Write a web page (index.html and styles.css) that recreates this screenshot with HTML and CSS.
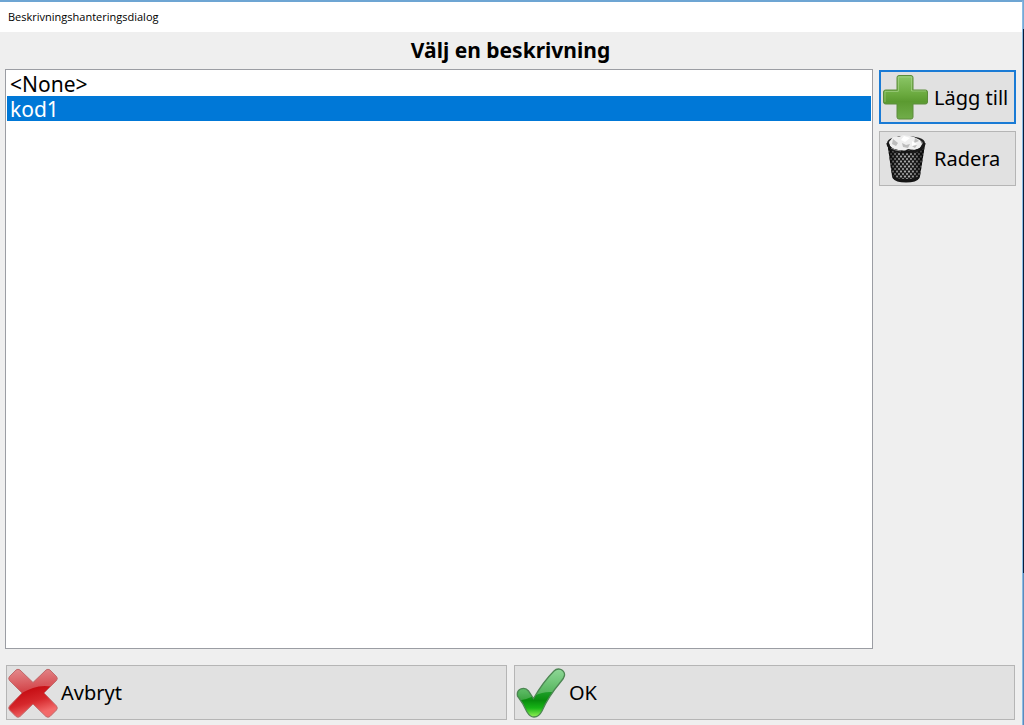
FILE: index.html
```html
<!DOCTYPE html>
<html lang="sv">
<head>
<meta charset="utf-8">
<meta name="viewport" content="width=device-width, initial-scale=1">
<title>Beskrivningshanteringsdialog</title>
<link rel="stylesheet" href="styles.css">
</head>
<body>
<div class="window">
  <header class="titlebar">Beskrivningshanteringsdialog</header>
  <main class="dialog">
    <h1 class="heading"><label for="descriptions">Välj en beskrivning</label></h1>
    <div class="content">
      <select class="list" id="descriptions" size="2">
        <option class="item">&lt;None&gt;</option>
        <option class="item" selected>kod1</option>
      </select>
      <div class="side">
        <button class="button button-default" type="button">
          <svg class="icon" viewBox="0 0 50 50" aria-hidden="true">
            <defs>
              <linearGradient id="plus" x1="0" y1="0" x2="0" y2="1">
                <stop offset="0" stop-color="#8cc768"/><stop offset=".45" stop-color="#69a83d"/><stop offset=".6" stop-color="#5b9a30"/><stop offset="1" stop-color="#71ad4a"/>
              </linearGradient>
            </defs>
            <path d="M18 3.500h12q2 0 2 2V18h12.500q2 0 2 2v10q0 2-2 2H32v13q0 2-2 2H18q-2 0-2-2V32H4.500q-2 0-2-2V20q0-2 2-2H16V5.500q0-2 2-2z" fill="url(#plus)" stroke="#5c8c3c"/>
            <path d="M17.500 19V5h13v14H45M4 30V19.500h13.500" fill="none" stroke="#b0d995" stroke-opacity=".55"/>
          </svg>
          <span>Lägg till</span>
        </button>
        <button class="button" type="button">
          <svg class="icon" viewBox="0 0 50 50" aria-hidden="true">
            <defs>
              <pattern id="mesh" width="4" height="5" patternUnits="userSpaceOnUse">
                <rect width="4" height="5" fill="#ccc"/>
                <path d="M0 0l4 5M4 0L0 5" stroke="#1c1c1c" stroke-width="1.300"/>
              </pattern>
              <linearGradient id="shade"><stop offset="0" stop-opacity=".85"/><stop offset=".3" stop-opacity=".2"/><stop offset=".6" stop-opacity=".1"/><stop offset="1" stop-opacity=".85"/></linearGradient>
            </defs>
            <path d="M6.500 10 11 42q2 6 14 6t14-6l5-32z" fill="url(#mesh)"/>
            <path d="M6.500 10 11 42q2 6 14 6t14-6l5-32z" fill="url(#shade)"/>
            <path d="M11 41q3 4 14 4t14-4l-.5 3q-3 4.500-13.500 4.500T11.500 44z" fill="#151515"/>
            <ellipse cx="25" cy="9" rx="18" ry="6" fill="#777" stroke="#222" stroke-width="2"/>
            <path d="m8 8 4-5 6 0 4-2 7 1 4 1 6 3 2 4-2 4-5 2-7-1-4 2-6-1-5-1-3-3z" fill="#efefef"/>
            <path d="m12 5 5 4-2 3-4-2zM21 9l4 2 4-1-2 4-5-1zM34 4l-1 5 5-2zM31 12l5-1-2 3z" fill="#bdbdbd"/>
            <path d="m23 2 6 2-5 4-4-2zM31 7l5 3-5 2z" fill="#fff"/>
            <path d="M6.500 9Q8 18 25 18T43.500 9" fill="none" stroke="#181818" stroke-width="2.500"/>
            <path d="M10 14q4 2.500 10 3" fill="none" stroke="#888"/>
          </svg>
          <span>Radera</span>
        </button>
      </div>
    </div>
    <footer class="footer">
      <button class="button" type="button">
        <svg class="icon" viewBox="0 0 50 50" aria-hidden="true">
          <defs>
            <linearGradient id="red" x1="0" y1="0" x2=".3" y2="1"><stop offset="0" stop-color="#cf3034"/><stop offset=".5" stop-color="#c60d13"/><stop offset=".75" stop-color="#d5272b"/><stop offset="1" stop-color="#f36a6a"/></linearGradient>
            <linearGradient id="redgloss" x1="0" y1="0" x2="0" y2="1"><stop offset="0" stop-color="#fff" stop-opacity=".45"/><stop offset="1" stop-color="#fff" stop-opacity=".15"/></linearGradient>
            <clipPath id="cross"><path d="M1.500 8.500 8 2q2-1.500 4 0L25 14.500 38 2q2-1.500 4 0L48.500 8.500q1.500 2 0 4L36 25l12.500 13q1.500 2 0 4L42 48.500q-2 1.500-4 0L25 36 12 48.500q-2 1.500-4 0L1.500 42q-1.500-2 0-4l12.500-13L1.500 12.500q-1.500-2 0-4z"/></clipPath>
          </defs>
          <g clip-path="url(#cross)">
            <path d="M0 0h50v50H0z" fill="url(#red)"/>
            <path d="M0 0h50v20Q36 16 25 20T10 28L0 32z" fill="url(#redgloss)"/>
          </g>
          <path d="M1.500 8.500 8 2q2-1.500 4 0L25 14.500 38 2q2-1.500 4 0L48.500 8.500q1.500 2 0 4L36 25l12.500 13q1.500 2 0 4L42 48.500q-2 1.500-4 0L25 36 12 48.500q-2 1.500-4 0L1.500 42q-1.500-2 0-4l12.500-13L1.500 12.500q-1.500-2 0-4z" fill="none" stroke="#c06a6b"/>
        </svg>
        <span>Avbryt</span>
      </button>
      <button class="button" type="button">
        <svg class="icon" viewBox="0 0 50 50" aria-hidden="true">
          <defs>
            <linearGradient id="green" x1="0" y1="0" x2="0" y2="1"><stop offset="0" stop-color="#45bd53"/><stop offset=".5" stop-color="#1c9c26"/><stop offset=".65" stop-color="#088c0d"/><stop offset=".8" stop-color="#17b516"/><stop offset="1" stop-color="#a4f860"/></linearGradient>
            <linearGradient id="greengloss" x1="0" y1="0" x2="0" y2="1"><stop offset="0" stop-color="#fff" stop-opacity=".4"/><stop offset="1" stop-color="#fff" stop-opacity=".2"/></linearGradient>
            <clipPath id="check"><path d="M1.500 28q-1-5 3-7 5-2 8 2l5 7.500Q27 14 38 3q3-3 7-1.500 4 2 3.500 6Q48 10 45 13.500 32 29 26 43q-3 6-8 6-4 0-7-5Q7 35 1.500 28z"/></clipPath>
          </defs>
          <g clip-path="url(#check)">
            <path d="M0 0h50v50H0z" fill="url(#green)"/>
            <path d="M0 0h50v24H34Q26 24 18 28T0 33z" fill="url(#greengloss)"/>
          </g>
          <path d="M1.500 28q-1-5 3-7 5-2 8 2l5 7.500Q27 14 38 3q3-3 7-1.500 4 2 3.500 6Q48 10 45 13.500 32 29 26 43q-3 6-8 6-4 0-7-5Q7 35 1.500 28z" fill="none" stroke="#4d8653" stroke-width="1.300"/>
        </svg>
        <span>OK</span>
      </button>
    </footer>
  </main>
</div>
</body>
</html>
```
FILE: styles.css
```css
* {
  box-sizing: border-box;
}

body {
  margin: 0;
  color: #000;
  font-family: "Noto Sans", "Open Sans", sans-serif;
  background: linear-gradient(#75a8d4 0 4%, #071d3d 4% 79%, #5c8abb 79%);
}

.window {
  display: flex;
  flex-direction: column;
  min-height: 100vh;
  margin-right: 1px;
  border-top: 2px solid #6da5d3;
  border-right: 1px solid #8abce4;
  background: #efefef;
}

.titlebar {
  height: 30px;
  padding-left: 8px;
  background: #fff;
  font-family: "Open Sans", "Noto Sans", sans-serif;
  font-size: 11px;
  line-height: 30px;
}

.dialog {
  display: flex;
  flex: 1;
  flex-direction: column;
  padding: 0 6px 5px 5px;
}

.heading {
  margin: 0;
  font-size: 21px;
  line-height: 37px;
  text-align: center;
}

.content {
  display: flex;
  flex: 1;
  gap: 6px;
}

.list {
  flex: 1;
  padding: 1px;
  border: 1px solid #9b9da3;
  border-radius: 0;
  outline: 0;
  background: #fff;
  color: #000;
  font: inherit;
  font-size: 21px;
}

.item {
  display: flex;
  align-items: center;
  height: 25px;
  min-height: 0;
  padding: 0 3px;
}

.item:checked {
  background: #0078d7 linear-gradient(#0078d7, #0078d7);
  color: #fff;
}

.side {
  display: flex;
  flex-direction: column;
  gap: 7px;
  width: 137px;
  padding-top: 1px;
}

.button {
  display: flex;
  align-items: center;
  gap: 3px;
  height: 55px;
  padding: 0 1px;
  border: 1px solid #b5b5b5;
  border-radius: 0;
  background: #e1e1e1;
  color: #000;
  font: inherit;
  font-size: 20px;
  white-space: nowrap;
}

.button-default {
  height: 54px;
  padding: 0;
  border: 2px solid #1a7bd5;
}

.icon {
  flex: none;
  width: 50px;
  height: 50px;
}

.footer {
  display: grid;
  grid-template-columns: 1fr 1fr;
  gap: 7px;
  padding: 16px 1px 0 1px;
}
```
